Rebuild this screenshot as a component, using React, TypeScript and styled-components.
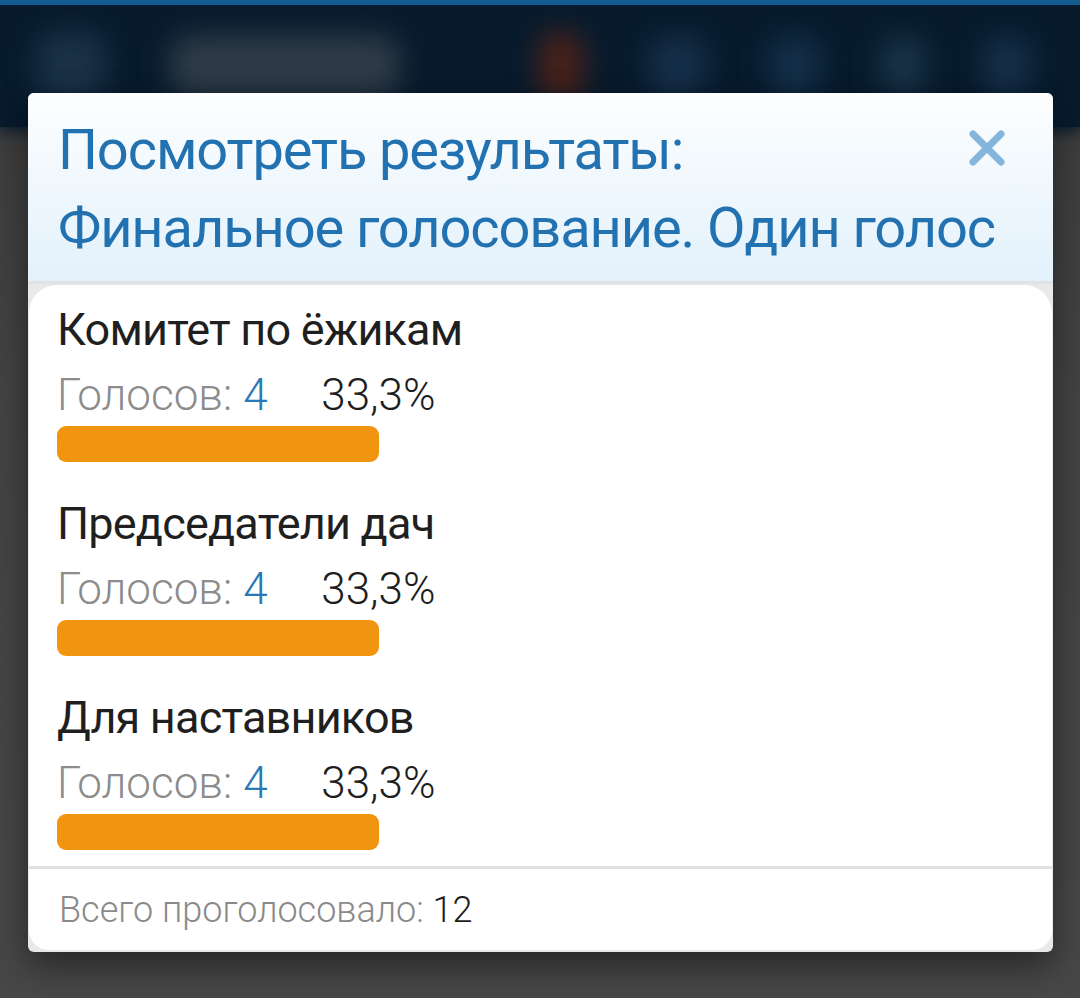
import React from "react";
import styled, { createGlobalStyle } from "styled-components";

const Global = createGlobalStyle`
  html, body { margin: 0; padding: 0; }
  body {
    width: 1080px;
    height: 998px;
    overflow: hidden;
    background: #454545;
    font-family: Roboto, "Noto Sans", "Liberation Sans", sans-serif;
  }
`;

const Page = styled.div`
  position: relative;
  width: 1080px;
  height: 998px;
  background: linear-gradient(180deg, #3b3b3b 0%, #434343 40%, #474747 100%);
`;

const AppBar = styled.div`
  height: 122px;
  border-top: 5px solid #135b90;
  background: #071b2d;
  box-shadow: 0 6px 12px rgba(7, 27, 45, 0.85);
  display: flex;
  align-items: center;
  padding: 0 40px 0 36px;
  overflow: hidden;
`;

const Blob = styled.span<{ $w: number; $h: number; $c: string; $ml: number }>`
  flex: none;
  width: ${(p) => p.$w}px;
  height: ${(p) => p.$h}px;
  margin-left: ${(p) => p.$ml}px;
  border-radius: 20px;
  background: ${(p) => p.$c};
  filter: blur(14px);
`;

const Modal = styled.div`
  position: absolute;
  top: 93px;
  left: 28px;
  width: 1025px;
  border-radius: 6px;
  background: #e9e9e9;
  box-shadow: 0 14px 34px rgba(0, 0, 0, 0.45);
  overflow: hidden;
`;

const Header = styled.div`
  display: flex;
  align-items: flex-start;
  justify-content: space-between;
  padding: 18px 30px 14px 30px;
  background: linear-gradient(180deg, #fdfeff 0%, #eef7fd 55%, #e3f1fb 100%);
  border-bottom: 3px solid #dfe3e6;
`;

const Title = styled.h1`
  flex: 1 1 auto;
  min-width: 0;
  margin: 0;
  font-family: Roboto, "Noto Sans", sans-serif;
  font-weight: 400;
  font-size: 56px;
  line-height: 78px;
  color: #2271b0;
  letter-spacing: -1.1px;
`;

const TitleLine = styled.span`
  display: block;
  white-space: nowrap;
`;

const Close = styled.button`
  flex: none;
  margin-top: 19px;
  margin-right: 18px;
  width: 36px;
  height: 36px;
  padding: 0;
  border: 0;
  background: transparent;
  display: flex;
  align-items: center;
  justify-content: center;
`;

const Body = styled.div`
  background: #ffffff;
  border-radius: 28px 28px 20px 20px;
  margin: 1px 1px 2px 1px;
`;

const Options = styled.div`
  display: flex;
  flex-direction: column;
  gap: 34px;
  padding: 17px 28px 16px 28px;
`;

const Option = styled.div`
  display: flex;
  flex-direction: column;
`;

const OptionName = styled.div`
  font-size: 45px;
  line-height: 56px;
  letter-spacing: -0.8px;
  color: #1f1f1f;
  white-space: nowrap;
`;

const Votes = styled.div`
  margin-top: 12px;
  display: flex;
  align-items: center;
  font-size: 44px;
  font-weight: 300;
  line-height: 50px;
  white-space: nowrap;
`;

const VotesLabel = styled.span`
  color: #8c8c8c;
`;

const VotesCount = styled.span`
  color: #2a78b6;
  width: 78px;
  margin-left: 11px;
`;

const Percent = styled.span`
  color: #1e1e1e;
`;

const Track = styled.div`
  margin-top: 6px;
  height: 36px;
  width: 100%;
`;

const Fill = styled.div`
  height: 100%;
  border-radius: 9px;
  background: #f19410;
`;

const Footer = styled.div`
  border-top: 3px solid #e0e0e0;
  padding: 21px 30px 20px 30px;
  font-size: 36px;
  font-weight: 300;
  line-height: 40px;
  white-space: nowrap;
`;

const FooterLabel = styled.span`
  color: #8a8a8a;
`;

const FooterValue = styled.span`
  color: #1e1e1e;
`;

const options = [
  { name: "Комитет по ёжикам", votes: 4, pct: 33.3 },
  { name: "Председатели дач", votes: 4, pct: 33.3 },
  { name: "Для наставников", votes: 4, pct: 33.3 },
];

export default function App() {
  return (
    <>
      <Global />
      <Page>
        <AppBar>
          <Blob $w={70} $h={70} $c="#1a3146" $ml={0} />
          <Blob $w={230} $h={62} $c="#2f3b47" $ml={64} />
          <Blob $w={46} $h={70} $c="#4a2119" $ml={138} />
          <Blob $w={56} $h={60} $c="#17304a" $ml={66} />
          <Blob $w={50} $h={60} $c="#15304a" $ml={64} />
          <Blob $w={46} $h={60} $c="#1a3347" $ml={60} />
          <Blob $w={46} $h={60} $c="#17304a" $ml={58} />
        </AppBar>
        <Modal>
          <Header>
            <Title>
              <TitleLine>Посмотреть результаты:</TitleLine>
              <TitleLine>Финальное голосование. Один голос</TitleLine>
            </Title>
            <Close aria-label="Закрыть">
              <svg width="36" height="36" viewBox="0 0 36 36">
                <path
                  d="M4 4 L32 32 M32 4 L4 32"
                  stroke="#86b5dc"
                  strokeWidth="7"
                  strokeLinecap="round"
                />
              </svg>
            </Close>
          </Header>
          <Body>
            <Options>
              {options.map((o) => (
                <Option key={o.name}>
                  <OptionName>{o.name}</OptionName>
                  <Votes>
                    <VotesLabel>Голосов:</VotesLabel>
                    <VotesCount>{o.votes}</VotesCount>
                    <Percent>{o.pct.toString().replace(".", ",")}%</Percent>
                  </Votes>
                  <Track>
                    <Fill style={{ width: `${o.pct}%` }} />
                  </Track>
                </Option>
              ))}
            </Options>
            <Footer>
              <FooterLabel>Всего проголосовало: </FooterLabel>
              <FooterValue>12</FooterValue>
            </Footer>
          </Body>
        </Modal>
      </Page>
    </>
  );
}
